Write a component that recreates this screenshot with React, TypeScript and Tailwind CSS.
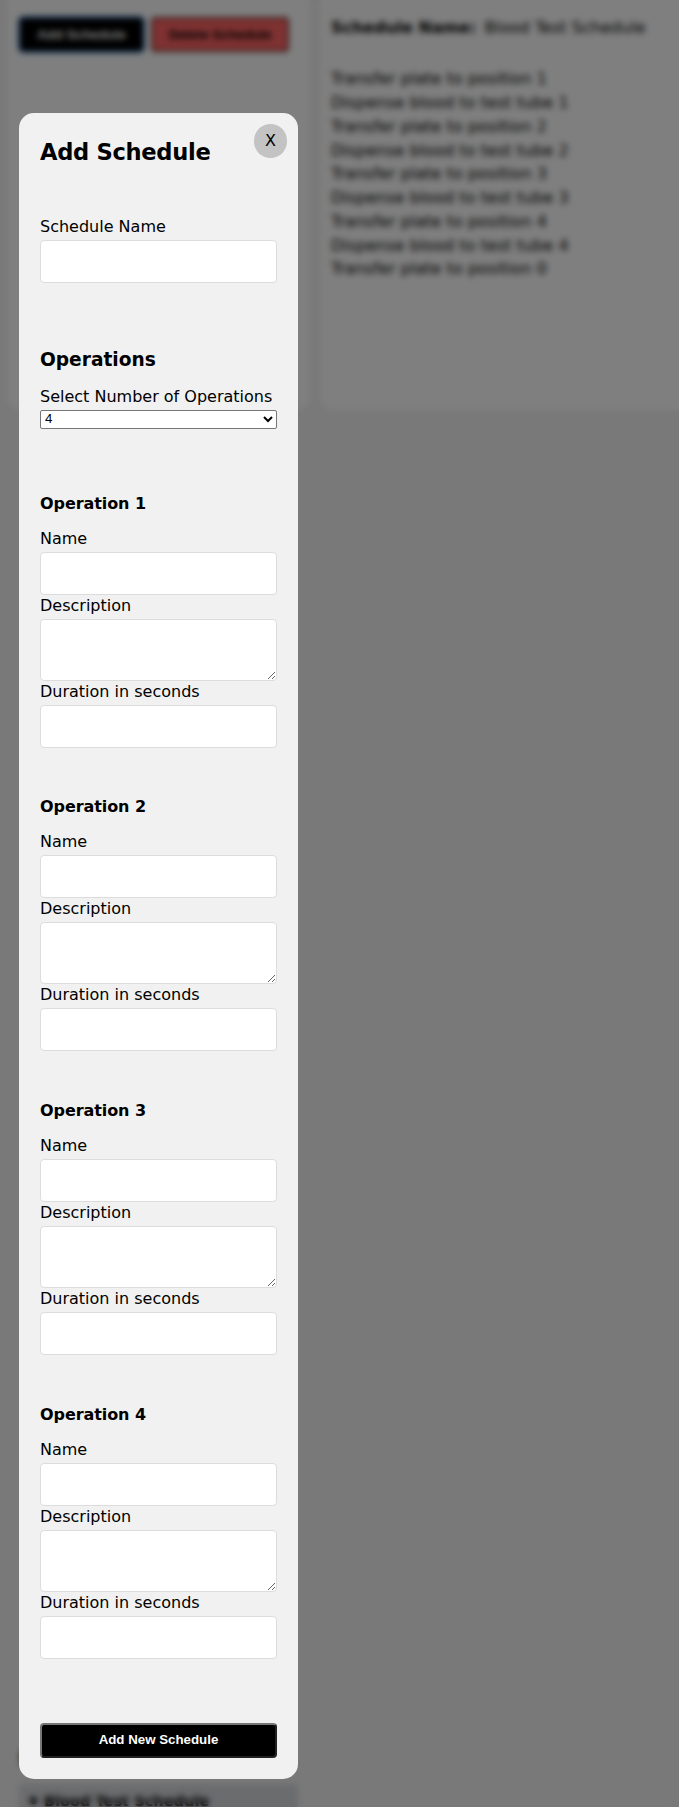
import React, { useState } from "react";

const steps = [
  "Transfer plate to position 1",
  "Dispense blood to test tube 1",
  "Transfer plate to position 2",
  "Dispense blood to test tube 2",
  "Transfer plate to position 3",
  "Dispense blood to test tube 3",
  "Transfer plate to position 4",
  "Dispense blood to test tube 4",
  "Transfer plate to position 0",
];

function Label({ children }: { children: React.ReactNode }) {
  return <div className="h-[24px] pt-px text-[16px] leading-[20px] whitespace-nowrap">{children}</div>;
}

function TextInput({ label }: { label: string }) {
  return (
    <label className="block">
      <Label>{label}</Label>
      <input
        type="text"
        className="block h-[43.2px] w-full rounded-[4px] border border-[#dcdcdc] bg-white px-3 outline-none"
      />
    </label>
  );
}

function TextArea({ label }: { label: string }) {
  return (
    <label className="block">
      <Label>{label}</Label>
      <textarea className="block h-[61.8px] w-full resize rounded-[4px] border border-[#dcdcdc] bg-white px-3 outline-none" />
    </label>
  );
}

function Operation({ index }: { index: number }) {
  return (
    <section className="h-[303.7px]">
      <h4 className="h-[34px] text-[16px] leading-[20px] font-bold tracking-[-0.08px]">Operation {index}</h4>
      <TextInput label="Name" />
      <TextArea label="Description" />
      <TextInput label="Duration in seconds" />
    </section>
  );
}

function Page() {
  return (
    <div className="flex h-full flex-col">
      <div className="flex h-[410px] shrink-0 gap-[10px] pl-[7px]">
        <div className="w-[303px] shrink-0 rounded-b-[14px] bg-white pt-[17px] pl-[12px]">
          <div className="flex gap-[7px] font-['Liberation_Sans',sans-serif] text-[13.3px] font-bold">
            <button className="h-[35px] w-[125px] rounded-[4px] border-2 border-[#1a3a60] bg-black text-white outline-1 outline-[#3f8be8]">
              Add Schedule
            </button>
            <button className="h-[35px] w-[138px] rounded-[4px] border-2 border-[#6b3535] bg-[#ff6464] text-black">
              Delete Schedule
            </button>
          </div>
        </div>
        <div className="w-[400px] shrink-0 rounded-b-[14px] bg-white pt-[16px] pl-[11px] text-[16px] leading-[23.75px] tracking-[0.04px] whitespace-nowrap">
          <p className="pb-[27.5px]">
            <span className="mr-[8px] font-bold tracking-[-0.05px]">Schedule Name:</span>
            <span>Blood Test Schedule</span>
          </p>
          {steps.map((step) => (
            <p key={step}>{step}</p>
          ))}
        </div>
      </div>
      <div className="mt-[1338px] ml-[19px] shrink-0">
        <h3 className="h-[36px] text-[18px] leading-[22px] font-bold">Schedules</h3>
        <div className="flex h-[40px] w-[279px] items-start gap-[4px] bg-[#d6d8dc] pt-[7px] pl-[8px] text-[14.6px] leading-[20px] font-bold">
          <span className="text-[20px]">•</span>
          <span>Blood Test Schedule</span>
        </div>
      </div>
    </div>
  );
}

export default function App() {
  const [count, setCount] = useState(4);
  return (
    <div className="relative h-[1807px] w-full overflow-hidden bg-[#f2f2f2] font-[Verdana,'DejaVu_Sans',sans-serif] text-black">
      <Page />
      <div className="absolute inset-0 bg-black/50 pt-[113px] pl-[19px] backdrop-blur-[3px]">
        <div className="relative h-[1666px] w-[279px] rounded-[15px] bg-[#f1f1f1] px-[21px] pt-[25px]">
          <button className="absolute top-[11px] right-[11px] flex h-[34px] w-[33px] items-center justify-center rounded-full bg-[#c3c3c3] text-[16px]">
            X
          </button>
          <h2 className="h-[78px] text-[22.6px] leading-[28px] font-bold tracking-[-0.3px] whitespace-nowrap">Add Schedule</h2>
          <TextInput label="Schedule Name" />
          <h3 className="mt-[65px] h-[37.4px] text-[18.6px] leading-[24px] font-bold">Operations</h3>
          <label className="block">
            <Label>Select Number of Operations</Label>
            <div className="relative">
              <select
                value={count}
                onChange={(e) => setCount(Number(e.target.value))}
                className="block h-[19px] w-full appearance-none rounded-[2px] border border-[#767676] bg-white pl-[4px] font-['Liberation_Sans',sans-serif] text-[13.3px] leading-[16px] outline-none"
              >
                {[1, 2, 3, 4].map((n) => (
                  <option key={n}>{n}</option>
                ))}
              </select>
              <svg className="pointer-events-none absolute top-[6px] right-[4px]" width="10" height="7" viewBox="0 0 10 7">
                <path d="M1 1 L5 5 L9 1" fill="none" stroke="black" strokeWidth="2" />
              </svg>
            </div>
          </label>
          <div className="mt-[65px]">
            {Array.from({ length: count }, (_, i) => (
              <Operation key={i} index={i + 1} />
            ))}
          </div>
          <button className="mt-[14.4px] block h-[35px] w-full rounded-[4px] border-2 border-t-[#767676] border-r-[#212121] border-b-[#212121] border-l-[#767676] bg-black font-['Liberation_Sans',sans-serif] text-[13.3px] font-bold text-white">
            Add New Schedule
          </button>
        </div>
      </div>
    </div>
  );
}
